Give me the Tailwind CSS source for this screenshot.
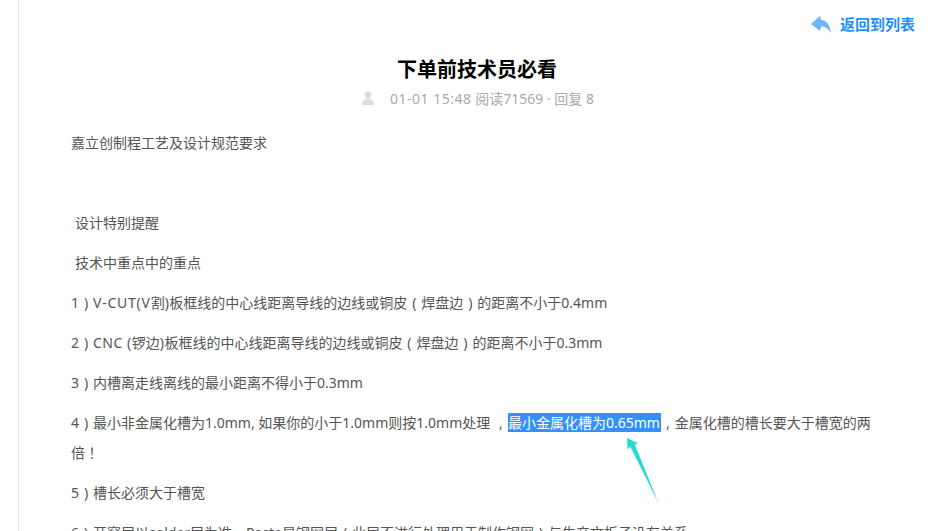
<!DOCTYPE html>
<html lang="zh-CN">
<head>
    <meta charset="UTF-8">
    <meta name="viewport" content="width=device-width, initial-scale=1.0">
    <title>下单前技术员必看</title>
    <script src="https://cdn.jsdelivr.net/npm/@tailwindcss/browser@4"></script>
</head>
<body class="bg-white h-[531px] overflow-hidden font-['Noto_Sans','Noto_Sans_CJK_SC',sans-serif]">
    <div class="relative ml-[18px] h-[531px] border-l border-l-[#dce8f3] overflow-hidden">
        <div class="flex justify-end items-center h-[48px] pr-[22px]">
            <a href="#" class="flex items-center gap-[9px] text-[15px] font-bold text-[#1e90ff]">
                <svg width="20" height="17" viewBox="0 0 20 17">
                    <path d="M0 8 L9 0 L10 4 C15 4 19 8 20 17 C17 12 14 10.500 10 10.500 L9 15 Z" fill="#6cb8fb"/>
                </svg>
                返回到列表
            </a>
        </div>
        <h1 class="text-center text-[20px] pt-[3px] leading-[38px] font-bold text-black pr-[2px]">下单前技术员必看</h1>
        <div class="flex justify-center items-center h-[18px] pr-[1px] text-[14px] text-[#aaaaaa]">
            <svg width="14" height="14" viewBox="0 0 14 14" class="mr-[15px]">
                <circle cx="7" cy="4" r="3.500" fill="#dddddd"/>
                <path d="M1 14 C1 9 4 8 7 8 C10 8 13 9 13 14 Z" fill="#dddddd"/>
            </svg>
            <span><span class="tracking-[0.5px]">01-01 15:48</span> 阅读71569 · 回复 8</span>
        </div>
        <div class="pl-[52px] pr-[48px] mt-[21px] text-[14px] leading-[30px] text-[#555555]">
            <p class="mb-[10px]">嘉立创制程工艺及设计规范要求</p>
            <p class="mb-[10px] h-[30px]"></p>
            <p class="mb-[10px] pl-[4px]">设计特别提醒</p>
            <p class="mb-[10px] pl-[4px]">技术中重点中的重点</p>
            <p class="mb-[10px]">1<span class="inline-block w-[14px] text-center">)</span><span class="tracking-[0.75px]">V-CUT(V</span>割<span class="tracking-[0.5px]">)</span>板框线的中心线距离导线的边线或铜皮<span class="inline-block w-[14px] text-center">(</span>焊盘边<span class="inline-block w-[14px] text-center">)</span>的距离不小于0.4mm</p>
            <p class="mb-[10px]">2<span class="inline-block w-[14px] text-center">)</span><span class="tracking-[0.5px]">CNC (</span>锣边<span class="tracking-[0.5px]">)</span>板框线的中心线距离导线的边线或铜皮<span class="inline-block w-[14px] text-center">(</span>焊盘边<span class="inline-block w-[14px] text-center">)</span>的距离不小于0.3mm</p>
            <p class="mb-[10px]">3<span class="inline-block w-[14px] text-center">)</span>内槽离走线离线的最小距离不得小于0.3mm</p>
            <p class="mb-[10px]">4<span class="inline-block w-[14px] text-center">)</span>最小非金属化槽为1.0mm, 如果你的小于1.0mm则按1.0mm处理 <span class="inline-block w-[14px] text-center">,</span><span class="bg-[#3390ff] text-white pr-[1px]">最小金属化槽为0.65mm</span><span class="inline-block w-[14px] text-center">,</span>金属化槽的槽长要大于槽宽的两倍<span lang="zh-TW" class="leading-none font-['Noto_Sans_CJK_TC']">！</span></p>
            <p class="mb-[10px]">5<span class="inline-block w-[14px] text-center">)</span>槽长必须大于槽宽</p>
            <p class="mb-[10px]">6<span class="inline-block w-[14px] text-center">)</span>开窗层以solder层为准<span class="inline-block w-[14px] text-center">,</span>Paste是钢网层<span class="inline-block w-[14px] text-center">(</span>此层不进行处理用于制作钢网<span class="inline-block w-[14px] text-center">)</span>与生产文板子没有关系</p>
        </div>
        <svg class="absolute left-[605px] top-[436px]" width="40" height="70" viewBox="0 0 40 70">
            <path d="M3 2 L13.500 7 L11 9 L34.500 67 L6.500 11 L3.500 13 Z" fill="#22dcd4"/>
        </svg>
    </div>
</body>
</html>
